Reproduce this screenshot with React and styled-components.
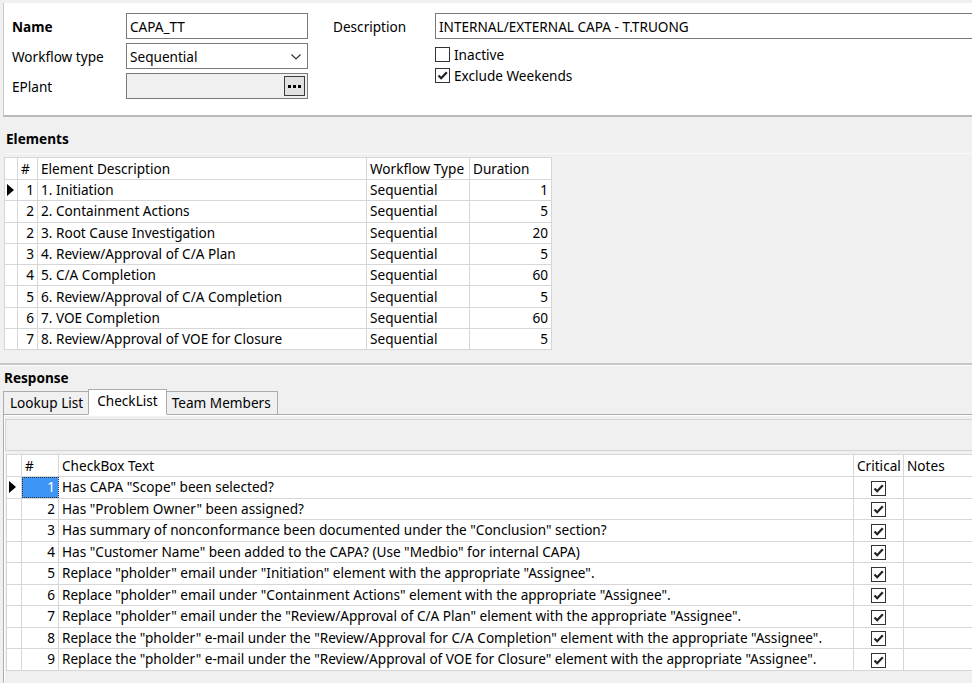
import React from 'react'
import styled, { createGlobalStyle } from 'styled-components'

const elements = [
  [1, '1. Initiation', 1],
  [2, '2. Containment Actions', 5],
  [2, '3. Root Cause Investigation', 20],
  [3, '4. Review/Approval of C/A Plan', 5],
  [4, '5. C/A Completion', 60],
  [5, '6. Review/Approval of C/A Completion', 5],
  [6, '7. VOE Completion', 60],
  [7, '8. Review/Approval of VOE for Closure', 5],
]

const checklist = [
  'Has CAPA "Scope" been selected?',
  'Has "Problem Owner" been assigned?',
  'Has summary of nonconformance been documented under the "Conclusion" section?',
  'Has "Customer Name" been added to the CAPA? (Use "Medbio" for internal CAPA)',
  'Replace "pholder" email under "Initiation" element with the appropriate "Assignee".',
  'Replace "pholder" email under "Containment Actions" element with the appropriate "Assignee".',
  'Replace "pholder" email under the "Review/Approval of C/A Plan" element with the appropriate "Assignee".',
  'Replace the "pholder" e-mail under the "Review/Approval for C/A Completion" element with the appropriate "Assignee".',
  'Replace the "pholder" e-mail under the "Review/Approval of VOE for Closure" element with the appropriate "Assignee".',
]

const Check = ({ checked }) => (
  <CheckBox>
    {checked && (
      <svg width="13" height="13" viewBox="0 0 13 13">
        <path d="M2.5 6.5 L5.2 9.2 L10.8 3.2" fill="none" stroke="#222" strokeWidth="2.2" />
      </svg>
    )}
  </CheckBox>
)

const Arrow = () => (
  <svg width="7" height="12" viewBox="0 0 7 12">
    <path d="M0 0 L7 6 L0 12 Z" fill="#000" />
  </svg>
)

export default function App() {
  return (
    <>
      <GlobalStyle />
      <Page>
        <TopPanel>
          <LeftForm>
            <FieldRow>
              <Label bold>Name</Label>
              <TextBox>CAPA_TT</TextBox>
            </FieldRow>
            <FieldRow>
              <Label>Workflow type</Label>
              <TextBox>
                Sequential
                <Chevron width="10" height="6" viewBox="0 0 10 6">
                  <path d="M0.5 0.5 L5 5 L9.5 0.5" fill="none" stroke="#333" strokeWidth="1.2" />
                </Chevron>
              </TextBox>
            </FieldRow>
            <FieldRow>
              <Label>EPlant</Label>
              <TextBox disabled>
                <DotsButton>
                  <svg width="13" height="3" viewBox="0 0 13 3">
                    <rect x="0" y="0" width="3" height="3" fill="#000" />
                    <rect x="5" y="0" width="3" height="3" fill="#000" />
                    <rect x="10" y="0" width="3" height="3" fill="#000" />
                  </svg>
                </DotsButton>
              </TextBox>
            </FieldRow>
          </LeftForm>
          <RightForm>
            <FieldRow>
              <Label wide>Description</Label>
              <TextBox grow>INTERNAL/EXTERNAL CAPA - T.TRUONG</TextBox>
            </FieldRow>
            <CheckRow first>
              <Check />
              <span>Inactive</span>
            </CheckRow>
            <CheckRow>
              <Check checked />
              <span>Exclude Weekends</span>
            </CheckRow>
          </RightForm>
        </TopPanel>

        <Section>
          <SectionTitle>Elements</SectionTitle>
          <ElementsGrid>
            <colgroup>
              <col style={{ width: 13 }} />
              <col style={{ width: 20 }} />
              <col style={{ width: 329 }} />
              <col style={{ width: 103 }} />
              <col style={{ width: 82 }} />
            </colgroup>
            <thead>
              <tr>
                <Th />
                <Th>#</Th>
                <Th>Element Description</Th>
                <Th>Workflow Type</Th>
                <Th>Duration</Th>
              </tr>
            </thead>
            <tbody>
              {elements.map(([n, desc, dur], i) => (
                <tr key={i}>
                  <Indicator>{i === 0 && <Arrow />}</Indicator>
                  <Td right>{n}</Td>
                  <Td>{desc}</Td>
                  <Td>Sequential</Td>
                  <Td right>{dur}</Td>
                </tr>
              ))}
            </tbody>
          </ElementsGrid>
        </Section>

        <ResponseSection>
          <SectionTitle small>Response</SectionTitle>
          <Tabs>
            <Tab>Lookup List</Tab>
            <Tab active>CheckList</Tab>
            <Tab>Team Members</Tab>
          </Tabs>
          <TabPanel>
            <ToolStrip />
            <CheckGrid>
              <colgroup>
                <col style={{ width: 15 }} />
                <col style={{ width: 37 }} />
                <col style={{ width: 795 }} />
                <col style={{ width: 50 }} />
                <col style={{ width: 100 }} />
              </colgroup>
              <thead>
                <tr>
                  <Th />
                  <Th>#</Th>
                  <Th>CheckBox Text</Th>
                  <Th>Critical</Th>
                  <Th>Notes</Th>
                </tr>
              </thead>
              <tbody>
                {checklist.map((text, i) => (
                  <tr key={i}>
                    <Indicator>{i === 0 && <Arrow />}</Indicator>
                    <Td right selected={i === 0}>{i + 1}</Td>
                    <Td>{text}</Td>
                    <Td center>
                      <Check checked />
                    </Td>
                    <Td />
                  </tr>
                ))}
              </tbody>
            </CheckGrid>
          </TabPanel>
        </ResponseSection>
      </Page>
    </>
  )
}

const GlobalStyle = createGlobalStyle`
  html, body {
    margin: 0;
    padding: 0;
    background: #f0f0f0;
    overflow: hidden;
  }
  body {
    font-family: "Noto Sans", "DejaVu Sans", sans-serif;
    font-size: 13.6px;
    color: #000;
  }
`
const Page = styled.div`
  width: 972px;
  height: 683px;
  overflow: hidden;
  display: flex;
  flex-direction: column;
`
const TopPanel = styled.div`
  margin: 3px 0 0 3px;
  height: 114px;
  flex: none;
  background: #fff;
  border-left: 1px solid #c8c8c8;
  border-bottom: 2px solid #b9b9b9;
  display: flex;
  padding: 10px 0 0 8px;
  box-sizing: border-box;
`
const LeftForm = styled.div`
  width: 321px;
  flex: none;
  display: flex;
  flex-direction: column;
  gap: 4px;
`
const RightForm = styled.div`
  display: flex;
  flex-direction: column;
  flex: none;
`
const FieldRow = styled.div`
  display: flex;
  align-items: center;
`
const Label = styled.div`
  width: ${p => (p.wide ? '102px' : '114px')};
  font-weight: ${p => (p.bold ? 700 : 400)};
  flex: none;
`
const TextBox = styled.div`
  position: relative;
  width: ${p => (p.grow ? '560px' : '182px')};
  height: 26px;
  box-sizing: border-box;
  border: 1px solid #7a7a7a;
  background: ${p => (p.disabled ? '#f0f0f0' : '#fff')};
  padding: 0 3px;
  display: flex;
  align-items: center;
  flex: none;
`
const Chevron = styled.svg`
  position: absolute;
  right: 6px;
  top: 10px;
`
const DotsButton = styled.div`
  position: absolute;
  right: 2px;
  top: 2px;
  width: 21px;
  height: 20px;
  box-sizing: border-box;
  border: 1px solid #3c3c3c;
  background: #e1e1e1;
  display: flex;
  align-items: center;
  justify-content: center;
`
const CheckRow = styled.div`
  display: flex;
  align-items: center;
  gap: 4px;
  margin-left: 102px;
  margin-top: ${p => (p.first ? '5px' : '0')};
  height: 21px;
`
const CheckBox = styled.span`
  width: 15px;
  height: 15px;
  box-sizing: border-box;
  border: 1px solid #333;
  background: #fff;
  display: inline-flex;
  align-items: center;
  justify-content: center;
  vertical-align: middle;
`
const Section = styled.div`
  height: 246px;
  flex: none;
  box-sizing: border-box;
  padding-left: 4px;
`
const SectionTitle = styled.div`
  font-weight: 700;
  height: ${p => (p.small ? '24px' : '36px')};
  line-height: ${p => (p.small ? '26px' : '44px')};
  margin-left: ${p => (p.small ? '1px' : '2px')};
  border-bottom: ${p => (p.small ? 'none' : '1px solid #fafafa')};
  margin-bottom: ${p => (p.small ? '0' : '3px')};
`
const ElementsGrid = styled.table`
  border-collapse: collapse;
  table-layout: fixed;
  width: 547px;
  background: #fff;
  border: 1px solid #d6d6d6;
  & td {
    height: 20.3px;
  }
`
const Th = styled.th`
  height: 21px;
  padding: 0 3px;
  text-align: left;
  font-weight: 400;
  border: 1px solid #d6d6d6;
  white-space: nowrap;
  overflow: hidden;
  background: #fff;
  line-height: 16px;
`
const Td = styled.td`
  padding: 0 3px;
  border: 1px solid #d6d6d6;
  white-space: nowrap;
  overflow: hidden;
  text-align: ${p => (p.right ? 'right' : p.center ? 'center' : 'left')};
  background: ${p => (p.selected ? '#3d95f5' : '#fff')};
  color: ${p => (p.selected ? '#fff' : '#000')};
  outline: ${p => (p.selected ? '1px dotted #333' : 'none')};
  outline-offset: -1px;
  line-height: 16px;
`
const Indicator = styled.td`
  padding: 0 0 0 2px;
  border: 1px solid #d6d6d6;
  background: #fff;
  line-height: 0;
`
const ResponseSection = styled.div`
  flex: 1;
  border-top: 2px solid #c8c8c8;
  box-shadow: inset 0 1px 0 #fafafa;
  display: flex;
  flex-direction: column;
  padding-left: 3px;
`
const Tabs = styled.div`
  display: flex;
  align-items: flex-end;
  height: 26px;
  flex: none;
  position: relative;
  z-index: 1;
`
const Tab = styled.div`
  height: ${p => (p.active ? '26px' : '24px')};
  margin: ${p => (p.active ? '0 -2px' : '0')};
  padding: ${p => (p.active ? '0 8px' : '0 6px')};
  box-sizing: border-box;
  border: 1px solid #acacac;
  border-bottom: ${p => (p.active ? '1px solid #fff' : '1px solid #acacac')};
  background: ${p => (p.active ? '#fff' : '#f0f0f0')};
  line-height: 22px;
  position: relative;
  z-index: ${p => (p.active ? 2 : 1)};
`
const TabPanel = styled.div`
  flex: 1;
  margin-top: -1px;
  border: 1px solid #acacac;
  border-right: none;
  border-bottom: none;
  background: #f0f0f0;
  box-shadow: inset 1px 1px 0 #fff;
  padding: 4px 0 0 1px;
  display: flex;
  flex-direction: column;
`
const ToolStrip = styled.div`
  height: 32px;
  flex: none;
  box-sizing: border-box;
  border: 1px solid #d3d3d3;
  border-right: none;
  background: #f0f0f0;
  margin-bottom: 3px;
`
const CheckGrid = styled.table`
  border-collapse: collapse;
  table-layout: fixed;
  width: 997px;
  margin-left: 1px;
  background: #fff;
  border: 1px solid #d6d6d6;
  & td {
    height: 20.5px;
  }
`
